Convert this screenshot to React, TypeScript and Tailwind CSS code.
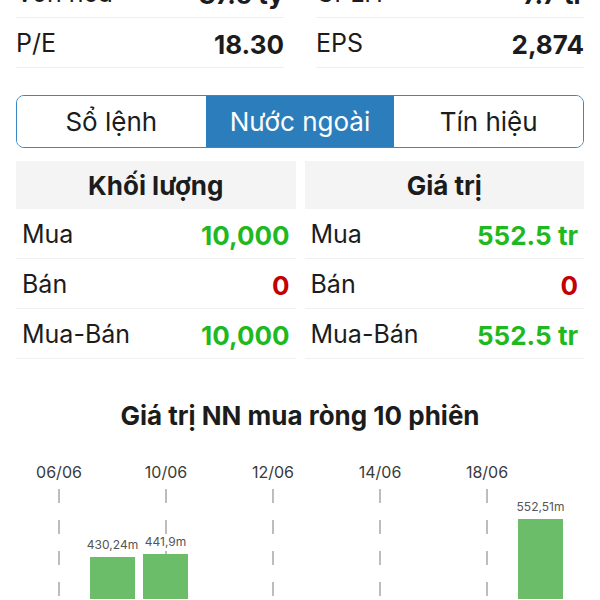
import React from 'react';

const font = { fontFamily: 'Inter, "Noto Sans", sans-serif' };

const stats = [
  [
    { label: 'Vốn hóa', value: '37.6 tỷ' },
    { label: 'CPLH', value: '7.7 tr' },
  ],
  [
    { label: 'P/E', value: '18.30' },
    { label: 'EPS', value: '2,874' },
  ],
];

const tabs = ['Sổ lệnh', 'Nước ngoài', 'Tín hiệu'];

const tables = [
  {
    title: 'Khối lượng',
    rows: [
      { label: 'Mua', value: '10,000', up: true },
      { label: 'Bán', value: '0', up: false },
      { label: 'Mua-Bán', value: '10,000', up: true },
    ],
  },
  {
    title: 'Giá trị',
    rows: [
      { label: 'Mua', value: '552.5 tr', up: true },
      { label: 'Bán', value: '0', up: false },
      { label: 'Mua-Bán', value: '552.5 tr', up: true },
    ],
  },
];

const dates = ['06/06', '10/06', '12/06', '14/06', '18/06'];

const bars = [
  { x: 90, top: 558, label: '430,24m' },
  { x: 143, top: 555, label: '441,9m' },
  { x: 518, top: 520, label: '552,51m' },
];

const Chart: React.FC = () => {
  const y0 = 450;
  return (
    <svg width="600" height="150" viewBox="0 0 600 150" className="block">
      {dates.map((d, i) => {
        const x = 59 + i * 107;
        return (
          <g key={d}>
            <text x={x} y={479 - y0} textAnchor="middle" fontSize="16" fill="#3a3a3a" style={font}>
              {d}
            </text>
            <line x1={x} y1={490 - y0} x2={x} y2={150} stroke="#a8a8a8" strokeWidth="1.5" strokeDasharray="14 17" />
          </g>
        );
      })}
      {bars.map((b) => (
        <g key={b.label}>
          <rect x={b.x} y={b.top - y0} width="45" height={150} fill="#6bbd69" />
          <text x={b.x + 22.5} y={b.top - y0 - 8} textAnchor="middle" fontSize="12" fill="#555" style={font}>
            {b.label}
          </text>
        </g>
      ))}
    </svg>
  );
};

const App: React.FC = () => {
  return (
    <div className="w-[600px] h-[600px] overflow-hidden bg-white text-[#1c1c1c]" style={font}>
      <div className="-mt-[32px] px-4">
        {stats.map((row, i) => (
          <div key={i} className="grid grid-cols-2 gap-8">
            {row.map((s) => (
              <div key={s.label} className="h-[50px] flex items-center justify-between border-b border-[#efefef] pt-[3px]">
                <span className="text-[25px]">{s.label}</span>
                <span className="text-[26px] font-bold">{s.value}</span>
              </div>
            ))}
          </div>
        ))}

        <div className="mt-[27px] grid grid-cols-3 h-[53px] border-[1.5px] border-[#3a87c2] rounded-lg overflow-hidden">
          {tabs.map((t, i) => (
            <div
              key={t}
              className={`flex items-center justify-center text-[26px] ${
                i === 1 ? 'bg-[#2c7dbb] text-white' : 'bg-white text-[#1c1c1c]'
              }`}
            >
              {t}
            </div>
          ))}
        </div>

        <div className="mt-[13px] grid grid-cols-2 gap-[9px]">
          {tables.map((tb) => (
            <div key={tb.title}>
              <div className="h-[48px] bg-[#f4f4f4] flex items-center justify-center text-[26px] font-bold">
                {tb.title}
              </div>
              {tb.rows.map((r) => (
                <div key={r.label} className="h-[50px] flex items-center justify-between px-[6px] border-b border-[#f0f0f0] pt-[3px]">
                  <span className="text-[25px]">{r.label}</span>
                  <span className={`text-[26px] font-bold ${r.up ? 'text-[#1fb91f]' : 'text-[#c40000]'}`}>
                    {r.value}
                  </span>
                </div>
              ))}
            </div>
          ))}
        </div>

        <h2 className="mt-[40px] text-center text-[26px] font-bold leading-[34px]">Giá trị NN mua ròng 10 phiên</h2>
      </div>
      <div className="mt-[16px]">
        <Chart />
      </div>
    </div>
  );
};

export default App;
